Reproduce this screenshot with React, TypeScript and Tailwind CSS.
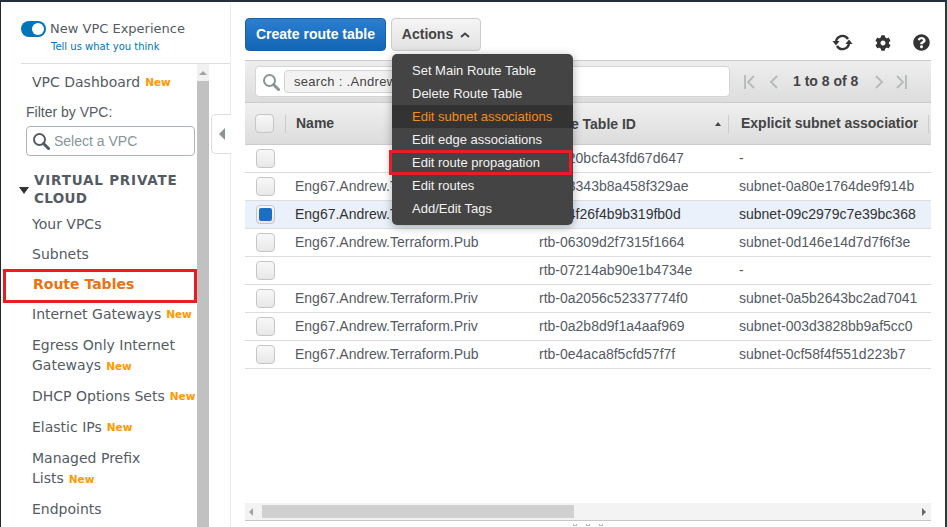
import { FaCog, FaQuestionCircle } from "react-icons/fa";

const verdana = "font-['DejaVu_Sans',sans-serif]";

function SearchIcon({ className }: { className: string }) {
  return (
    <svg viewBox="0 0 18 18" className={className} fill="none" stroke="currentColor">
      <circle cx="7.5" cy="7.5" r="5.5" strokeWidth="2" />
      <path d="M11.5 11.5L16.5 16.5" strokeWidth="3" strokeLinecap="round" />
    </svg>
  );
}

function NewTag() {
  return <span className="ml-[5px] text-[10.5px] font-bold text-[#ff9900]">New</span>;
}

function NavItem({ label, isNew }: { label: string; isNew?: boolean }) {
  return (
    <div className="pl-[31px] h-[30px] flex items-center text-[14px] leading-[20px] text-[#545b64] whitespace-nowrap">
      <span>{label}</span>
      {isNew && <NewTag />}
    </div>
  );
}

function Sidebar() {
  return (
    <div className={`w-[230px] shrink-0 flex flex-col border-r border-[#eaeded] ${verdana}`}>
      <div className="ml-[20px] mt-[17px] h-[45px] border-b border-[#dddddd] shrink-0">
        <div className="flex items-center gap-[4px]">
          <div className="w-[25px] h-[16px] rounded-full bg-[#0073bb] flex items-center justify-end pr-[2px]">
            <div className="w-[12px] h-[12px] rounded-full bg-white" />
          </div>
          <span className="text-[13px] leading-[20px] text-[#545b64]">New VPC Experience</span>
        </div>
        <div className="ml-[30px] text-[10px] leading-[16px] text-[#0073bb]">Tell us what you think</div>
      </div>
      <div className="flex flex-1 min-h-0 relative">
        <div className="w-[196px] shrink-0 pt-[3px] overflow-hidden">
          <NavItem label="VPC Dashboard" isNew />
          <div className="ml-[25px] mt-[5px] text-[14px] leading-[20px] text-[#545b64] font-['Liberation_Sans',sans-serif]">Filter by VPC:</div>
          <div className="ml-[25px] mt-[4px] w-[169px] h-[30px] border border-[#aab7b8] rounded-[4px] flex items-center pl-[5px] gap-[4px] font-['Liberation_Sans',sans-serif]">
            <SearchIcon className="w-[18px] h-[18px] text-[#545b64]" />
            <span className="text-[14px] text-[#879596]">Select a VPC</span>
          </div>
          <div className="mt-[15px] ml-[18px] flex">
            <div className="mt-[16px] w-0 h-0 border-l-[5px] border-r-[5px] border-t-[7px] border-l-transparent border-r-transparent border-t-[#333333]" />
            <div className="ml-[5px] text-[13.5px] leading-[18px] font-bold tracking-[0.3px] text-[#545b64]">
              <span className="tracking-[0.8px]">VIRTUAL PRIVATE</span>
              <br />
              CLOUD
            </div>
          </div>
          <div className="mt-[2px]">
            <NavItem label="Your VPCs" />
            <NavItem label="Subnets" />
          </div>
          <div className="relative h-[30px] pl-[32px] flex items-center text-[14px] font-bold text-[#ec7211] whitespace-nowrap">
            Route Tables
            <div className="absolute left-[2px] right-[0px] top-0 h-[34px] border-[3px] border-[#ed1c24]" />
          </div>
          <NavItem label="Internet Gateways" isNew />
          <div className="pl-[31px] pt-[6px] pb-[5px] text-[14px] leading-[20px] text-[#545b64] whitespace-nowrap">
            <div>Egress Only Internet</div>
            <span>Gateways</span>
            <NewTag />
          </div>
          <div className="pl-[31px] h-[31px] flex items-center text-[14px] text-[#545b64] whitespace-nowrap">
            <span>DHCP Options Sets</span>
            <NewTag />
          </div>
          <div className="pl-[31px] h-[31px] flex items-center text-[14px] text-[#545b64] whitespace-nowrap">
            <span>Elastic IPs</span>
            <NewTag />
          </div>
          <div className="pl-[31px] pt-[5px] pb-[5px] text-[14px] leading-[20px] text-[#545b64] whitespace-nowrap">
            <div>Managed Prefix</div>
            <span>Lists</span>
            <NewTag />
          </div>
          <NavItem label="Endpoints" />
        </div>
        <div className="w-[12px] shrink-0 flex flex-col">
          <div className="h-[17px] bg-[#f1f1f1] flex items-center justify-center">
            <div className="w-0 h-0 border-l-[4px] border-r-[4px] border-b-[4px] border-l-transparent border-r-transparent border-b-[#a3a3a3]" />
          </div>
          <div className="flex-1 bg-[#c1c1c1]" />
        </div>
        <div className="absolute left-[210px] top-[50px] w-[20px] h-[40px] bg-white border border-r-0 border-[#dddddd] rounded-l-[5px] flex items-center justify-center">
          <div className="w-0 h-0 border-t-[6px] border-b-[6px] border-r-[6px] border-t-transparent border-b-transparent border-r-[#879596]" />
        </div>
      </div>
    </div>
  );
}

const menuItems = ["Set Main Route Table", "Delete Route Table", "Edit subnet associations", "Edit edge associations", "Edit route propagation", "Edit routes", "Add/Edit Tags"];

function ActionsMenu() {
  return (
    <div className="absolute left-[147px] top-[36px] z-10 w-[181px] h-[171px] rounded-[5px] bg-[#444444] py-[5px] shadow-[0_2px_10px_rgba(0,0,0,0.3)]">
      {menuItems.map((item) => {
        const active = item === "Edit subnet associations";
        return (
          <div key={item} className={`relative h-[23px] pl-[20px] flex items-center text-[13px] ${active ? "bg-[#333333] text-[#f58c1c]" : "text-[#f2f2f2]"}`}>
            {item}
            {item === "Edit route propagation" && (
              <div className="absolute -left-[3px] right-[1px] -top-[1px] -bottom-[1px] border-[3px] border-[#ed1c24]" />
            )}
          </div>
        );
      })}
    </div>
  );
}

const rows = [
  { name: "", id: "rtb-020bcfa43fd67d647", subnet: "-" },
  { name: "Eng67.Andrew.Terraform.Priv", id: "rtb-03343b8a458f329ae", subnet: "subnet-0a80e1764de9f914b" },
  { name: "Eng67.Andrew.Terraform.Pub", id: "rtb-04f26f4b9b319fb0d", subnet: "subnet-09c2979c7e39bc368", selected: true },
  { name: "Eng67.Andrew.Terraform.Pub", id: "rtb-06309d2f7315f1664", subnet: "subnet-0d146e14d7d7f6f3e" },
  { name: "", id: "rtb-07214ab90e1b4734e", subnet: "-" },
  { name: "Eng67.Andrew.Terraform.Priv", id: "rtb-0a2056c52337774f0", subnet: "subnet-0a5b2643bc2ad7041" },
  { name: "Eng67.Andrew.Terraform.Priv", id: "rtb-0a2b8d9f1a4aaf969", subnet: "subnet-003d3828bb9af5cc0" },
  { name: "Eng67.Andrew.Terraform.Pub", id: "rtb-0e4aca8f5cfd57f7f", subnet: "subnet-0cf58f4f551d223b7" },
];

function Checkbox({ checked }: { checked?: boolean }) {
  return (
    <div className="w-[19px] h-[19px] rounded-[4px] border border-[#c6c6c6] bg-gradient-to-b from-[#f8f8f8] to-[#e8e8e8] flex items-center justify-center">
      {checked && <div className="w-[13px] h-[13px] rounded-[2px] bg-[#1b6ec2]" />}
    </div>
  );
}

function Pager() {
  return (
    <div className="flex items-center ml-[14px] text-[#b4b9ba]">
      <svg viewBox="0 0 11 14" className="w-[11px] h-[14px]" fill="none" stroke="currentColor" strokeWidth="1.8"><path d="M1 0V14M10 1L4 7L10 13" /></svg>
      <svg viewBox="0 0 9 14" className="ml-[14px] w-[9px] h-[14px]" fill="none" stroke="currentColor" strokeWidth="1.8"><path d="M8 1L2 7L8 13" /></svg>
      <span className="ml-[15px] text-[14px] font-bold text-[#444444]">1 to 8 of 8</span>
      <svg viewBox="0 0 9 14" className="ml-[17px] w-[9px] h-[14px]" fill="none" stroke="currentColor" strokeWidth="1.8"><path d="M1 1L7 7L1 13" /></svg>
      <svg viewBox="0 0 11 14" className="ml-[12px] w-[11px] h-[14px]" fill="none" stroke="currentColor" strokeWidth="1.8"><path d="M1 1L7 7L1 13M10 0V14" /></svg>
    </div>
  );
}

function SyncIcon() {
  return (
    <svg viewBox="0 0 21 17" className="w-[21px] h-[17px]" fill="none" stroke="currentColor" strokeWidth="2.4">
      <path d="M4 8A6.5 6.5 0 0 1 16 5" />
      <path d="M17 9A6.5 6.5 0 0 1 5 12" />
      <path d="M0.5 7H7.5L4 11.5Z" fill="currentColor" stroke="none" />
      <path d="M13.5 10H20.5L17 5.5Z" fill="currentColor" stroke="none" />
    </svg>
  );
}

function Main() {
  return (
    <div className="flex-1 min-w-0 pl-[14px] pr-[14px] pt-[16px] flex flex-col relative font-['Liberation_Sans',sans-serif]">
      <div className="relative flex items-start h-[42px] shrink-0">
        <div className="h-[33px] w-[141px] rounded-[4px] border border-[#1a5fa8] bg-gradient-to-b from-[#2b7fd0] to-[#1266b5] text-white text-[14px] font-bold flex items-center justify-center">Create route table</div>
        <div className="ml-[5px] h-[33px] w-[90px] rounded-[4px] border border-[#cccccc] bg-gradient-to-b from-[#f5f5f5] to-[#e2e2e2] text-[#444444] text-[14px] font-bold flex items-center justify-center gap-[7px]">
          Actions
          <svg viewBox="0 0 10 6" className="w-[10px] h-[6px]" fill="none" stroke="#444444" strokeWidth="2"><path d="M1 5L5 1.5L9 5" /></svg>
        </div>
        <div className="ml-auto mt-[16px] mr-[1px] flex items-center gap-[22px] text-[#333333]">
          <SyncIcon />
          <FaCog className="w-[16px] h-[16px]" />
          <FaQuestionCircle className="w-[17px] h-[17px]" />
        </div>
        <ActionsMenu />
      </div>
      <div className="h-[42px] shrink-0 border-t border-[#cccccc] bg-gradient-to-b from-[#eeeeee] to-[#dddddd] flex items-center pl-[10px]">
        <div className="w-[475px] h-[31px] bg-white border border-[#d5d5d5] rounded-[4px] flex items-center pl-[6px]">
          <SearchIcon className="w-[18px] h-[18px] text-[#879596]" />
          <div className="ml-[4px] h-[23px] w-[120px] rounded-[4px] border border-[#d5d5d5] bg-[#f2f2f2] pl-[9px] text-[13px] leading-[21px] tracking-[0.3px] text-[#444444] whitespace-nowrap overflow-hidden">search : .Andrew</div>
        </div>
        <Pager />
      </div>
      <div className="h-[43px] shrink-0 border-y border-[#cccccc] bg-gradient-to-b from-[#f0f0f0] to-[#dcdcdc] flex items-center text-[14px] font-bold text-[#444444] overflow-hidden">
        <div className="w-[40px] shrink-0 flex justify-end pr-[11px]"><Checkbox /></div>
        <div className="w-[254px] h-[18px] shrink-0 border-l border-[#cccccc] pl-[10px] leading-[16px]">Name</div>
        <div className="w-[189px] shrink-0 pr-[7px] flex items-center justify-between h-[18px] leading-[16px]">
          Route Table ID
          <div className="w-0 h-0 border-l-[3px] border-r-[3px] border-b-[4px] border-l-transparent border-r-transparent border-b-[#444444]" />
        </div>
        <div className="w-[201px] h-[18px] shrink-0 border-x border-[#cccccc] pl-[12px] leading-[16px]">
          <div className="w-[177px] whitespace-nowrap overflow-hidden">Explicit subnet association</div>
        </div>
      </div>
      {rows.map((row) => (
        <div key={row.id} className={`h-[28px] shrink-0 border-b border-[#dddddd] flex items-center text-[14px] whitespace-nowrap ${row.selected ? "bg-[#eaf1fb] text-[#333333]" : "text-[#545b64]"}`}>
          <div className="w-[40px] shrink-0 flex justify-end pr-[10px]"><Checkbox checked={row.selected} /></div>
          <div className="w-[254px] shrink-0 pl-[10px]">{row.name}</div>
          <div className="w-[200px] shrink-0">{row.id}</div>
          <div>{row.subnet}</div>
        </div>
      ))}
      <div className="mt-auto h-[17px] shrink-0 bg-[#f3f3f3] border-b border-[#c8c8c8] flex items-center box-content">
        <div className="w-[5px] ml-[4px] flex">
          <div className="w-0 h-0 border-y-[4px] border-r-[4px] border-y-transparent border-r-[#a3a3a3]" />
        </div>
        <div className="ml-[8px] w-[312px] h-[13px] bg-[#d0d0d0]" />
        <div className="ml-auto mr-[5px] w-0 h-0 border-y-[4px] border-l-[4px] border-y-transparent border-l-[#666666]" />
      </div>
      <div className="h-[6px] shrink-0 flex items-end justify-center gap-[9px] pb-[1px]">
        <div className="w-[4px] h-[2px] border-x border-b border-[#bbbbbb]" />
        <div className="w-[4px] h-[2px] border-x border-b border-[#bbbbbb]" />
        <div className="w-[4px] h-[2px] border-x border-b border-[#bbbbbb]" />
      </div>
    </div>
  );
}

export default function App() {
  return (
    <div className="w-[947px] h-[527px] overflow-hidden bg-white flex flex-col">
      <div className="h-[2px] shrink-0 bg-[#232f3e]" />
      <div className="flex flex-1 min-h-0 border-l border-l-[#1f2a30] border-r-2 border-r-[#2a3a34]">
        <Sidebar />
        <Main />
      </div>
    </div>
  );
}
